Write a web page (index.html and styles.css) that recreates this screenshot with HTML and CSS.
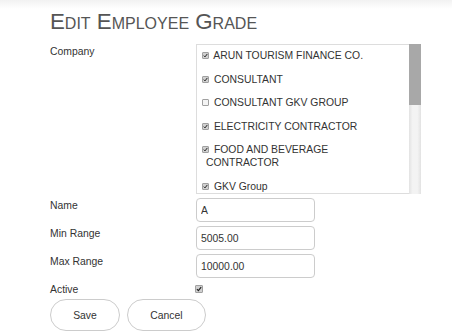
FILE: index.html
```html
<!DOCTYPE html>
<html lang="en">
<head>
    <meta charset="UTF-8">
    <title>Edit Employee Grade</title>
    <link rel="stylesheet" href="styles.css">
</head>
<body>
    <div class="page">
        <h1 class="title">Edit Employee Grade</h1>

        <form class="grade-form">
            <label class="field-label">Company</label>
            <div class="company-list">
                <div class="company-pane">
                    <label class="company-item"><input type="checkbox" checked> ARUN TOURISM FINANCE CO.</label>
                    <label class="company-item"><input type="checkbox" checked> CONSULTANT</label>
                    <label class="company-item"><input type="checkbox"> CONSULTANT GKV GROUP</label>
                    <label class="company-item"><input type="checkbox" checked> ELECTRICITY CONTRACTOR</label>
                    <label class="company-item"><input type="checkbox" checked> FOOD AND BEVERAGE CONTRACTOR</label>
                    <label class="company-item"><input type="checkbox" checked> GKV Group</label>
                    <label class="company-item"><input type="checkbox" checked> HOUSEKEEPING CONTRACTOR</label>
                    <label class="company-item"><input type="checkbox" checked> KAMAL ENTERPRISES</label>
                    <label class="company-item"><input type="checkbox"> MAINTENANCE SERVICES</label>
                    <label class="company-item"><input type="checkbox" checked> SECURITY CONTRACTOR</label>
                </div>
                <div class="scrollbar"><div class="scroll-thumb"></div></div>
            </div>

            <label class="field-label">Name</label>
            <input type="text" class="text-input" value="A">

            <label class="field-label">Min Range</label>
            <input type="text" class="text-input" value="5005.00">

            <label class="field-label">Max Range</label>
            <input type="text" class="text-input" value="10000.00">

            <label class="field-label active-label">Active</label>
            <div class="active-box"><input type="checkbox" checked></div>
        </form>

        <div class="actions">
            <button class="btn btn-save">Save</button>
            <button class="btn btn-cancel">Cancel</button>
        </div>
    </div>
</body>
</html>
```

FILE: styles.css
```css
body {
    margin: 0;
    font-family: "Liberation Sans", Arial, sans-serif;
    color: #333;
    background: linear-gradient(to bottom, #f2f2f2 0px, #ffffff 9px);
    min-height: 335px;
}

.page {
    padding: 10px 0 0 50px;
}

.title {
    margin: 0 0 11px;
    font-size: 22.3px;
    font-weight: normal;
    font-variant: small-caps;
    line-height: 23px;
    color: #555;
}

.grade-form {
    display: grid;
    grid-template-columns: 146px 119px;
    row-gap: 4px;
    align-items: start;
}

.field-label {
    font-size: 10.4px;
    line-height: 14px;
    padding-top: 1px;
}

.company-list {
    display: flex;
    width: 225px;
    height: 150px;
}

.company-pane {
    flex: 1;
    border: 1px solid #ddd;
    border-right: none;
    overflow: hidden;
}

.scrollbar {
    width: 12px;
    background: linear-gradient(to right, #e2e2e2, #f3f3f3 30%, #f3f3f3 70%, #e2e2e2);
}

.scroll-thumb {
    height: 61px;
    background: #a8a8a8;
}

.company-item {
    display: block;
    font-size: 10.4px;
    line-height: 13px;
    padding: 4px 6px 6.6px 9px;
}

input[type="checkbox"] {
    appearance: none;
    -webkit-appearance: none;
    box-sizing: border-box;
    width: 7px;
    height: 7px;
    margin: 0 2px 0 -4px;
    border: 1px solid #a0a0a0;
    border-radius: 1px;
    background: #f4f4f4;
    vertical-align: 0;
}

input[type="checkbox"]:checked {
    background: #d0d0d0 url("data:image/svg+xml,%3Csvg xmlns='http://www.w3.org/2000/svg' viewBox='0 0 8 8'%3E%3Cpath d='M1.2 4.2 L3.2 6.2 L6.9 1.5' fill='none' stroke='%23222' stroke-width='1.6'/%3E%3C/svg%3E") no-repeat center / 100% 100%;
}

.text-input {
    width: 119px;
    height: 24px;
    box-sizing: border-box;
    border: 1px solid #ccc;
    border-radius: 4px;
    padding: 0 4px;
    line-height: 22px;
    font-family: "Liberation Sans", Arial, sans-serif;
    font-size: 10.4px;
    color: #333;
}

.active-label {
    height: 12px;
}

.active-box {
    box-sizing: border-box;
    height: 12px;
    padding-top: 3px;
}

.active-box input[type="checkbox"] {
    width: 8px;
    height: 8px;
    margin: 0 0 0 -1px;
    display: block;
}

.actions {
    display: flex;
    gap: 7px;
    margin-top: 4px;
}

.btn {
    height: 32px;
    border: 1px solid #ccc;
    border-radius: 16px;
    background: #fff;
    font-family: "Liberation Sans", Arial, sans-serif;
    font-size: 10.4px;
    color: #333;
    padding: 0;
}

.btn-save {
    width: 70px;
}

.btn-cancel {
    width: 79px;
}
```
